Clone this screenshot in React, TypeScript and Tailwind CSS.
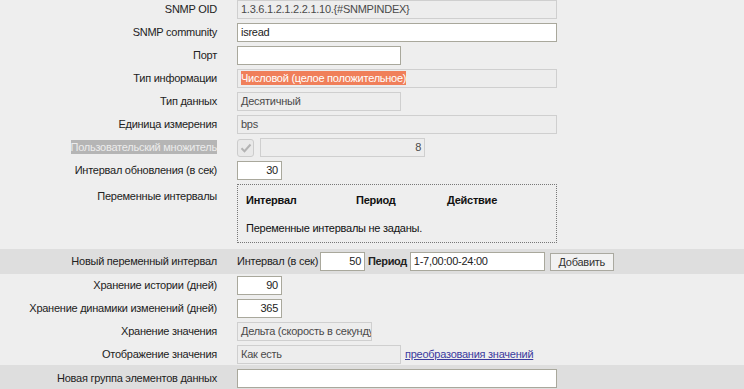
import React from 'react';

const inputOn = 'h-[19px] border border-[#a9a89c] bg-white px-[3px] leading-[17px] text-[#222]';
const inputOff = 'h-[19px] border border-[#cfcfcf] bg-[#ededed] px-[3px] leading-[17px] text-[#4a4a4a] overflow-hidden whitespace-nowrap';

const Row: React.FC<{ label: React.ReactNode; children: React.ReactNode; gray?: boolean; h?: string }> = ({
  label,
  children,
  gray,
  h = 'h-[23px]',
}) => (
  <div className={`flex items-center gap-[20px] ${h} ${gray ? 'bg-[#dedede]' : ''}`}>
    <div className="w-[217px] text-right whitespace-nowrap text-[#222]">{label}</div>
    <div className="flex items-center">{children}</div>
  </div>
);

const App: React.FC = () => {
  return (
    <div className="min-h-[389px] w-[744px] overflow-hidden bg-[#eeeeee] font-['Liberation_Sans',Arial,sans-serif] text-[11px] tracking-[-0.25px]">
      <div className="-mt-[2px]">
        <Row label="SNMP OID">
          <div className={`${inputOff} w-[320px]`}>1.3.6.1.2.1.2.2.1.10.{'{#SNMPINDEX}'}</div>
        </Row>
        <Row label="SNMP community">
          <div className={`${inputOn} w-[320px]`}>isread</div>
        </Row>
        <Row label="Порт">
          <div className={`${inputOn} w-[164px]`}></div>
        </Row>
        <Row label="Тип информации">
          <div className={`${inputOff} w-[320px]`}>
            <span className="bg-[#f07f5a] py-[1px] text-white">Числовой (целое положительное)</span>
          </div>
        </Row>
        <Row label="Тип данных">
          <div className={`${inputOff} w-[164px]`}>Десятичный</div>
        </Row>
        <Row label="Единица измерения">
          <div className={`${inputOff} w-[320px]`}>bps</div>
        </Row>
        <Row label={<span className="bg-[#b5b5b5] py-[1px] text-[#ececec]">Пользовательский множитель</span>}>
          <div className="flex h-[18px] w-[17px] items-center justify-center rounded-[3px] border border-[#cccccc] bg-[#e9e9e9]">
            <svg width="12" height="10" viewBox="0 0 12 10">
              <path d="M1.5 5.2 L4.5 8.2 L10.5 1.5" fill="none" stroke="#b3b3b3" strokeWidth="2" />
            </svg>
          </div>
          <div className={`${inputOff} ml-[6px] w-[165px] text-right`}>8</div>
        </Row>
        <Row label="Интервал обновления (в сек)">
          <div className={`${inputOn} w-[45px] text-right`}>30</div>
        </Row>
        <div className="flex h-[67px] items-start gap-[20px] pt-[2px]">
          <div className="w-[217px] pt-[4px] text-right text-[#222]">Переменные интервалы</div>
          <div className="h-[59px] w-[320px] border border-dotted border-[#777] px-[8px] pt-[7px] text-[#111]">
            <div className="flex font-bold">
              <div className="w-[110px]">Интервал</div>
              <div className="w-[91px]">Период</div>
              <div>Действие</div>
            </div>
            <div className="mt-[11px]">Переменные интервалы не заданы.</div>
          </div>
        </div>
        <Row label="Новый переменный интервал" gray h="h-[25px]">
          <span className="text-[#222]">Интервал (в сек)</span>
          <div className={`${inputOn} ml-[2px] w-[45px] text-right`}>50</div>
          <span className="ml-[3px] font-bold tracking-[-0.4px] text-[#222]">Период</span>
          <div className={`${inputOn} ml-[3px] w-[135px]`}>1-7,00:00-24:00</div>
          <button
            type="button"
            className="ml-[5px] h-[18px] w-[64px] border border-[#aaa9a0] bg-[#f2f2f2] leading-[16px] text-[#333]"
          >
            Добавить
          </button>
        </Row>
        <Row label="Хранение истории (дней)">
          <div className={`${inputOn} w-[45px] text-right`}>90</div>
        </Row>
        <Row label="Хранение динамики изменений (дней)">
          <div className={`${inputOn} w-[45px] text-right`}>365</div>
        </Row>
        <Row label="Хранение значения">
          <div className={`${inputOff} w-[135px]`}>Дельта (скорость в секунду)</div>
        </Row>
        <Row label="Отображение значения" h="h-[22px]">
          <div className={`${inputOff} w-[164px]`}>Как есть</div>
          <a href="#" className="ml-[4px] text-[#3b3b9e] underline">
            преобразования значений
          </a>
        </Row>
        <Row label="Новая группа элементов данных" gray h="h-[26px]">
          <div className={`${inputOn} w-[320px]`}></div>
        </Row>
      </div>
    </div>
  );
};

export default App;
